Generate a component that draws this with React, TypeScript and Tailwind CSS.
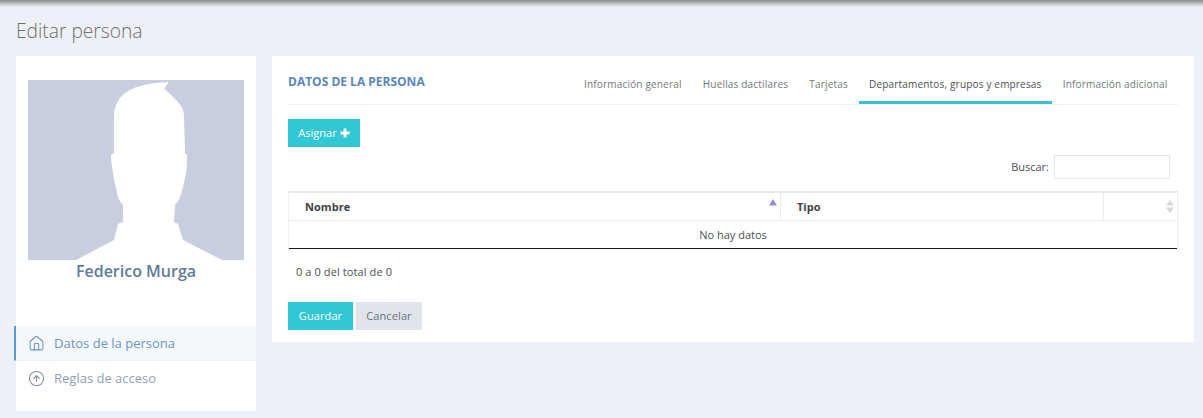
import { Home, CircleArrowUp } from 'lucide-react';

const tabs = [
  { label: 'Información general' },
  { label: 'Huellas dactilares' },
  { label: 'Tarjetas' },
  { label: 'Departamentos, grupos y empresas', active: true },
  { label: 'Información adicional' },
];

function SortIcon({ up, down }: { up: string; down: string }) {
  return (
    <svg width="8" height="13" viewBox="0 0 8 13" className="block">
      <path d="M4 0L8 5.5H0Z" fill={up} />
      <path d="M4 13L8 7.5H0Z" fill={down} />
    </svg>
  );
}

export default function App() {
  return (
    <div className="h-[418px] w-[1203px] overflow-hidden bg-[#edf0f5] font-['Open_Sans',sans-serif]">
      {/* Top shadow */}
      <div className="h-[7px] bg-gradient-to-b from-[#8b8d90] to-[#edf0f5]" />

      <h1 className="ml-4 mt-[10px] h-[39px] text-[19.2px] font-light leading-[28px] text-[#6f6f6f]">Editar persona</h1>

      <div className="flex items-start gap-4 px-4">
        {/* Sidebar */}
        <aside className="h-[355px] w-[240px] bg-white pt-6">
          <div className="mx-3 h-[180px] w-[216px] bg-[#c8cde0]">
            <svg viewBox="0 0 216 180" className="block h-full w-full">
              <path
                fill="#fff"
                d="M140.5 2.3L136.5 8.5C140 13 146 17 150 22C154 27 156 31 156 36L157 73L159 75C159 82 159 88 158 93C156 103 154 112 152 117C151 120 149 123 147 125L146 142L150 144L155 160L194 180H48L86 160L90 144L95 142V125C93 123 91 120 90 117C88 110 86 100 85 93C84 87 83 81 83 75L86 73V36C86 29 88 23 92 18C97 12 103 9 109 7C120 3.5 130 2.5 140.5 2.3Z"
              />
            </svg>
          </div>
          <div className="text-center text-[16px] font-semibold leading-[22px] text-[#5f7b98]">Federico Murga</div>

          <nav className="mt-[44px]">
            <a className="-ml-[2px] flex h-[35px] items-center border-b border-l-2 border-b-[#eef2f6] border-l-[#5a9bd5] bg-[#f5f8fb] pl-[12px] pt-[1px] text-[13px] text-[#6a96c8]">
              <Home size={17} strokeWidth={1.5} className="mr-[9px] text-[#6a96c8]" />
              Datos de la persona
            </a>
            <a className="flex h-[35px] items-center pl-[12px] text-[13px] text-[#8f9fb3]">
              <CircleArrowUp size={17} strokeWidth={1.5} className="mr-[9px] text-[#7f8ea3]" />
              Reglas de acceso
            </a>
          </nav>
        </aside>

        {/* Main card */}
        <main className="h-[286px] w-[922px] bg-white px-4">
          <div className="flex h-[49px] items-start justify-between border-b border-[#eef0f3]">
            <h2 className="mt-[16px] text-[12px] font-bold leading-[20px] text-[#5b86bd]">DATOS DE LA PERSONA</h2>
            <div className="flex h-[48px] items-start">
              {tabs.map((tab) => (
                <div
                  key={tab.label}
                  className={`h-[48px] px-[10.6px] pt-[20px] text-[10px] leading-[17px] tracking-[0.175px] ${
                    tab.active ? 'border-b-[3px] border-[#35c3d1] text-[#4a4f55]' : 'text-[#73787e]'
                  }`}
                >
                  {tab.label}
                </div>
              ))}
            </div>
          </div>

          <button className="mt-[14px] flex h-[28px] w-[72px] items-center justify-center gap-[3px] bg-[#31c7d4] text-[11px] text-white">
            Asignar
            <svg width="10" height="10" viewBox="0 0 10 10">
              <path d="M3.6 0.5H6.4V3.6H9.5V6.4H6.4V9.5H3.6V6.4H0.5V3.6H3.6Z" fill="#fff" />
            </svg>
          </button>

          <div className="mt-[8px] flex h-[24px] items-center justify-end gap-[5px] pr-[8px]">
            <span className="text-[11px] text-[#4a4f55]">Buscar:</span>
            <input className="h-[24px] w-[116px] border border-[#e4e6e9] bg-white" />
          </div>

          <div className="mt-[12px] w-[890px] border-x border-t-2 border-x-[#eef0f3] border-t-[#e6e7e9]">
            <div className="flex h-[28px] border-b border-[#e8ecf1]">
              <div className="relative flex w-[492px] items-center border-r border-[#e8ecf1] pl-4 pt-[1px] text-[11px] font-bold tracking-[0.05px] text-[#3f3f46]">
                Nombre
                <div className="absolute right-[3px] top-[6px]">
                  <svg width="8" height="7" viewBox="0 0 8 7" className="block">
                    <path d="M4 0L8 6.5H0Z" fill="#8f8fdb" />
                  </svg>
                </div>
              </div>
              <div className="flex w-[323px] items-center border-r border-[#e8ecf1] pl-4 pt-[1px] text-[11px] font-bold text-[#3f3f46]">Tipo</div>
              <div className="flex flex-1 items-center justify-end pr-[3px]">
                <SortIcon up="#d5d8dc" down="#d5d8dc" />
              </div>
            </div>
            <div className="flex h-[28px] items-center justify-center border-b border-b-[#17181a] pt-[1px] text-[11px] text-[#4a4f55]">No hay datos</div>
          </div>

          <div className="mt-[15px] pl-2 text-[11px] leading-[16px] tracking-[0.1px] text-[#4a4f55]">0 a 0 del total de 0</div>

          <div className="mt-[22px] flex gap-[3px]">
            <button className="h-[28px] w-[65px] bg-[#31c7d4] text-[11px] tracking-[0.1px] text-white">Guardar</button>
            <button className="h-[28px] w-[66px] bg-[#e0e4ea] text-[11px] tracking-[0.1px] text-[#6b7280]">Cancelar</button>
          </div>
        </main>
      </div>
    </div>
  );
}
